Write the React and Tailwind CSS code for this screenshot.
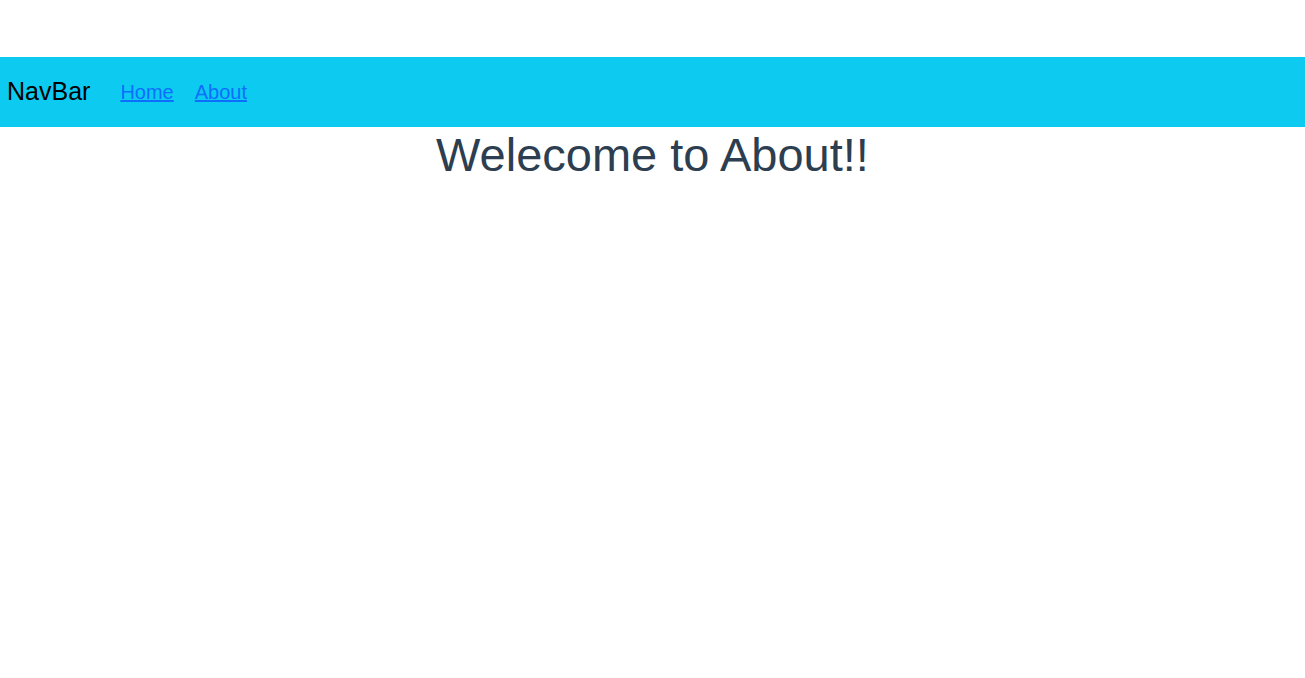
export default function App() {
  return (
    <div className="min-h-[678px] bg-white pt-[57px]" style={{ fontFamily: '"Liberation Sans", Arial, sans-serif' }}>
      <nav className="flex h-[70px] items-center bg-[#0dcaf0] pl-[7px]">
        <span className="text-[25px] text-black">NavBar</span>
        <a href="#" className="ml-[30px] text-[20px] text-[#0d6efd] underline">Home</a>
        <a href="#" className="ml-[21px] text-[20px] text-[#0d6efd] underline">About</a>
      </nav>
      <h1 className="text-center text-[47px] leading-[55px] text-[#2c3e50]">Welecome to About!!</h1>
    </div>
  );
}
